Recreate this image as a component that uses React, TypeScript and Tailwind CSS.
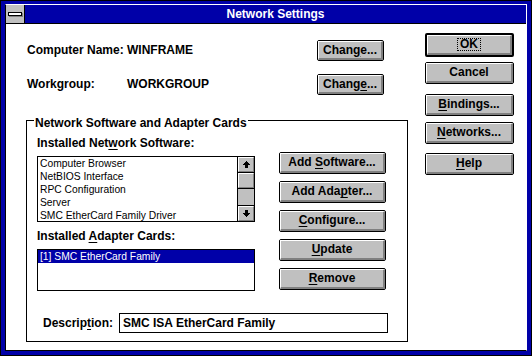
import React from "react";

function U({ children }: { children: React.ReactNode }) {
  return <span className="underline decoration-1 underline-offset-[2px]">{children}</span>;
}

function Btn({
  children,
  className,
  def,
}: {
  children: React.ReactNode;
  className: string;
  def?: boolean;
}) {
  return (
    <div
      className={`${className} rounded-[2px] border-black bg-[#c0c0c0] ${def ? "border-2" : "border"}`}
    >
      <div className="flex h-full w-full items-center justify-center border-t border-l border-r-2 border-b-2 border-t-white border-l-white border-r-[#808080] border-b-[#808080] text-[12px] font-bold leading-[13px] text-black whitespace-nowrap">
        {children}
      </div>
    </div>
  );
}

function Arrow({ down }: { down?: boolean }) {
  return (
    <svg
      width="7"
      height="7"
      viewBox="0 0 7 7"
      shapeRendering="crispEdges"
      className={down ? "rotate-180" : ""}
    >
      <rect x="3" y="0" width="1" height="1" fill="#000" />
      <rect x="2" y="1" width="3" height="1" fill="#000" />
      <rect x="1" y="2" width="5" height="1" fill="#000" />
      <rect x="0" y="3" width="7" height="1" fill="#000" />
      <rect x="2" y="4" width="3" height="3" fill="#000" />
    </svg>
  );
}

function Raised({ children, className }: { children?: React.ReactNode; className: string }) {
  return (
    <div
      className={`${className} flex items-center justify-center bg-[#c0c0c0] border-t border-l border-r border-b border-t-white border-l-white border-r-[#808080] border-b-[#808080]`}
    >
      {children}
    </div>
  );
}

export default function App() {
  const items = [
    "Computer Browser",
    "NetBIOS Interface",
    "RPC Configuration",
    "Server",
    "SMC EtherCard Family Driver",
  ];
  return (
    <div className="font-['Liberation_Sans',Arial,sans-serif] w-[532px] h-[356px] border border-black bg-[#0000a8] pt-[3px] pl-[4px] pr-[4px] pb-[4px] text-black">
      <div className="flex h-full w-full flex-col border-l border-b border-t border-r border-l-black border-b-black border-t-white border-r-white">
        {/* Title bar */}
        <div className="flex h-[19px] shrink-0 border-b border-black">
          <div className="flex w-[19px] items-center justify-center border-r border-black bg-[#c0c0c0]">
            <div className="h-[4px] w-[14px] border border-black bg-white shadow-[1px_1px_0_#808080]" />
          </div>
          <div className="flex flex-1 items-center justify-center bg-[#0000a8] text-[12px] font-bold leading-[13px] text-white">
            Network Settings
          </div>
        </div>

        {/* Client */}
        <div className="flex flex-1 bg-white pl-[20px]">
          {/* Left section */}
          <div className="w-[382px]">
            <div className="mt-[16px] flex h-[21px] items-center pl-[1px] text-[12px] font-bold leading-[13px]">
              <div className="w-[100px]">Computer Name:</div>
              <div className="w-[190px]">WINFRAME</div>
              <Btn className="h-[21px] w-[67px]">
                <span>
                  Chan<U>g</U>e...
                </span>
              </Btn>
            </div>
            <div className="mt-[13px] flex h-[21px] items-center pl-[1px] text-[12px] font-bold leading-[13px]">
              <div className="w-[100px]">Workgroup:</div>
              <div className="w-[190px]">WORKGROUP</div>
              <Btn className="h-[21px] w-[67px]">
                <span>
                  Chang<U>e</U>...
                </span>
              </Btn>
            </div>

            {/* Group box */}
            <div className="relative mt-[25px] h-[222px] w-[382px] border border-black pl-[10px]">
              <div className="absolute left-[7px] top-[-4px] bg-white px-[1px] text-[12px] font-bold leading-[13px]">
                Network Software and Adapter Cards
              </div>
              <div className="flex items-start">
                {/* left column */}
                <div className="w-[218px] pt-[16px]">
                  <div className="h-[13px] text-[12px] font-bold leading-[13px] whitespace-nowrap">
                    Installed Net<U>w</U>ork Software:
                  </div>
                  <div className="mt-[6px] flex h-[66px] w-[218px] border border-black bg-white">
                    <div className="flex-1 overflow-hidden">
                      {items.map((t) => (
                        <div key={t} className="h-[13px] pl-[2px] text-[10.3px] leading-[13px] whitespace-nowrap">
                          {t}
                        </div>
                      ))}
                    </div>
                    <div className="flex w-[17px] flex-col border-l border-black bg-[#c0c0c0]">
                      <div className="h-[16px] border-b border-black">
                        <Raised className="h-[15px] w-full">
                          <Arrow />
                        </Raised>
                      </div>
                      <div className="h-[16px] border-b border-black">
                        <Raised className="h-[15px] w-full" />
                      </div>
                      <div className="h-[16px]" />
                      <div className="h-[16px] border-t border-black">
                        <Raised className="h-[15px] w-full">
                          <Arrow down />
                        </Raised>
                      </div>
                    </div>
                  </div>
                  <div className="mt-[8px] h-[13px] text-[12px] font-bold leading-[13px] whitespace-nowrap">
                    Installed <U>A</U>dapter Cards:
                  </div>
                  <div className="mt-[6px] h-[42px] w-[218px] border border-black bg-white">
                    <div className="h-[13px] bg-[#0000a8] pl-[2px] text-[10.3px] leading-[13px] text-white whitespace-nowrap">
                      [1] SMC EtherCard Family
                    </div>
                  </div>
                </div>
                {/* right column */}
                <div className="ml-[24px] flex w-[107px] flex-col gap-[7px] pt-[31px]">
                  <Btn className="h-[22px] w-[107px]">
                    <span>
                      Add <U>S</U>oftware...
                    </span>
                  </Btn>
                  <Btn className="h-[22px] w-[107px]">
                    <span>
                      Add Ada<U>p</U>ter...
                    </span>
                  </Btn>
                  <Btn className="h-[22px] w-[107px]">
                    <span>
                      <U>C</U>onfigure...
                    </span>
                  </Btn>
                  <Btn className="h-[22px] w-[107px]">
                    <span>
                      <U>U</U>pdate
                    </span>
                  </Btn>
                  <Btn className="h-[22px] w-[107px]">
                    <span>
                      <U>R</U>emove
                    </span>
                  </Btn>
                </div>
              </div>
              {/* Description */}
              <div className="mt-[22px] flex items-center">
                <div className="w-[82px] pl-[6px] text-[12px] font-bold leading-[13px]">
                  Descrip<U>t</U>ion:
                </div>
                <div className="flex h-[20px] w-[269px] items-center border border-black pl-[3px] text-[12px] font-bold leading-[13px]">
                  SMC ISA EtherCard Family
                </div>
              </div>
            </div>
          </div>

          {/* Right column */}
          <div className="ml-[17px] flex w-[89px] flex-col pt-[9px]">
            <Btn className="h-[24px] w-[89px]" def>
              <span className="border border-dotted border-black px-[2px] leading-[11px]">OK</span>
            </Btn>
            <Btn className="mt-[5px] h-[22px] w-[89px]">Cancel</Btn>
            <Btn className="mt-[10px] h-[22px] w-[89px]">
              <span>
                <U>B</U>indings...
              </span>
            </Btn>
            <Btn className="mt-[6px] h-[22px] w-[89px]">
              <span>
                <U>N</U>etworks...
              </span>
            </Btn>
            <Btn className="mt-[9px] h-[22px] w-[89px]">
              <span>
                <U>H</U>elp
              </span>
            </Btn>
          </div>
        </div>
      </div>
    </div>
  );
}
